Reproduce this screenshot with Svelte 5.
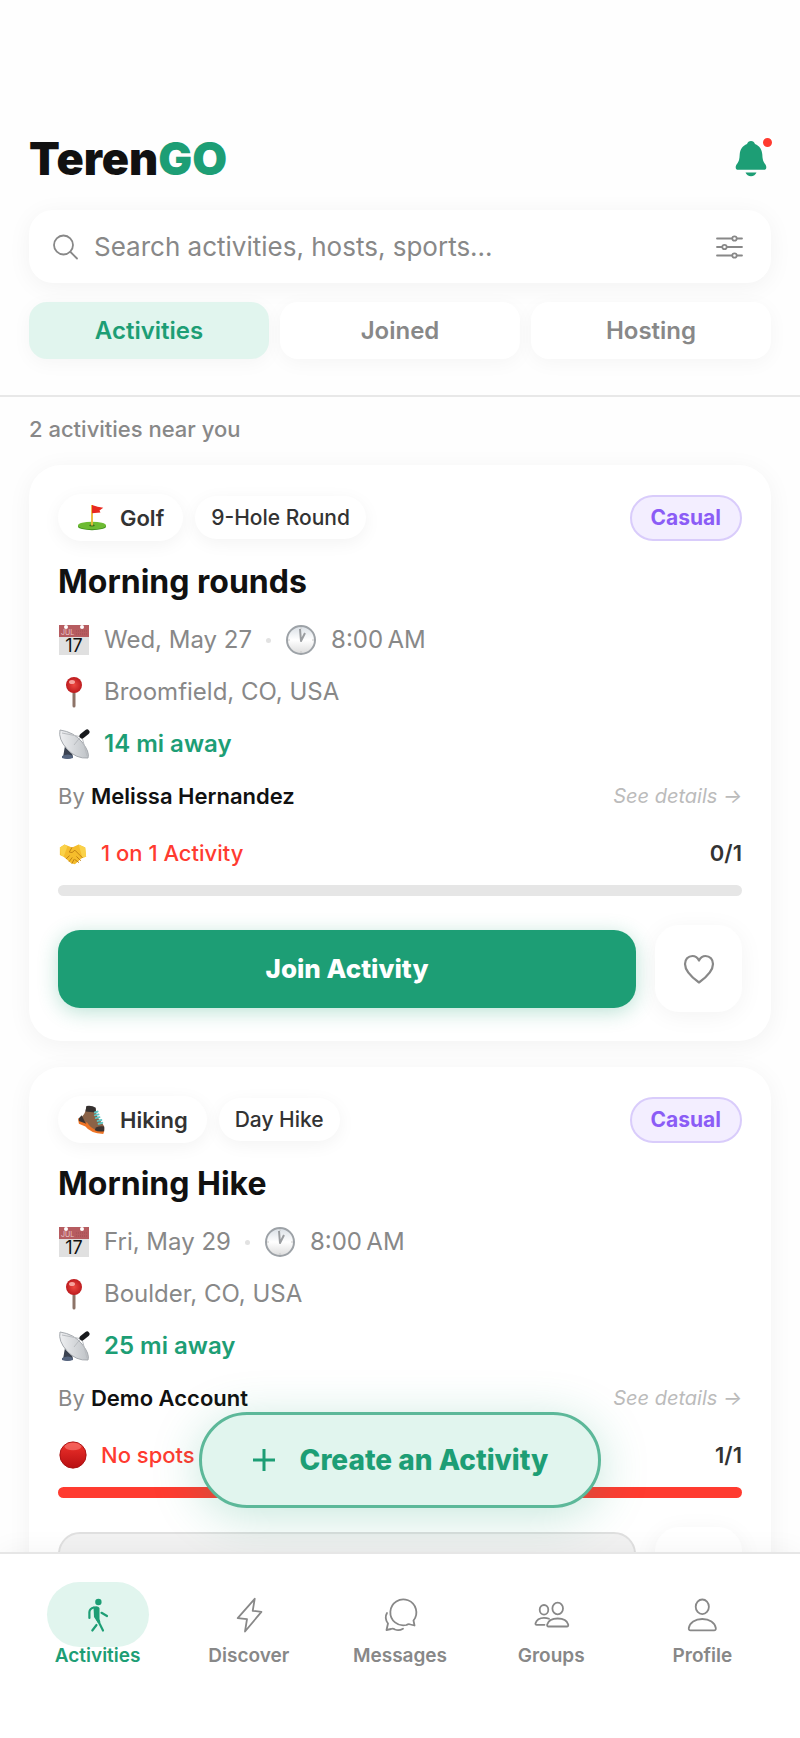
<script>
  let tab = $state('Activities');
  let page = $state('Activities');
  let search = $state('');
  let liked = $state([]);

  const tabs = ['Activities', 'Joined', 'Hosting'];
  const pages = ['Activities', 'Discover', 'Messages', 'Groups', 'Profile'];

  const activities = [
    {
      id: 1,
      sport: 'Golf',
      kind: '9-Hole Round',
      level: 'Casual',
      title: 'Morning rounds',
      date: 'Wed, May 27',
      time: '8:00\u202fAM',
      place: 'Broomfield, CO, USA',
      distance: '14 mi away',
      host: 'Melissa Hernandez',
      note: '1 on 1 Activity',
      joined: 0,
      spots: 1,
    },
    {
      id: 2,
      sport: 'Hiking',
      kind: 'Day Hike',
      level: 'Casual',
      title: 'Morning Hike',
      date: 'Fri, May 29',
      time: '8:00\u202fAM',
      place: 'Boulder, CO, USA',
      distance: '25 mi away',
      host: 'Demo Account',
      note: 'No spots',
      joined: 1,
      spots: 1,
    },
  ];

  function toggleLike(id) {
    liked = liked.includes(id) ? liked.filter((x) => x !== id) : [...liked, id];
  }
</script>

{#snippet emoji(name)}
  <svg class="emoji" viewBox="0 0 32 32" aria-hidden="true">
    {#if name === 'Golf'}
      <ellipse cx="16" cy="25" rx="15" ry="4" fill="#3f8f1d" />
      <ellipse cx="16" cy="24" rx="15" ry="4" fill="#6dbb33" />
      <ellipse cx="16" cy="24" rx="3" ry="1" fill="#3b6b1c" />
      <path d="M16 2v22" stroke="#e9b93a" stroke-width="2" />
      <path d="M16 2l6 2 6 1-4 3 1 2-9 1z" fill="#e8281f" />
    {:else if name === 'Hiking'}
      <path d="M1 14l1 6 7 3q5 7 19 8l1-3-12-4-7-7z" fill="#ee7426" />
      <path d="M10 2l10 2q0 8 5 13 5 5 4 10l-10-1q-5-2-8-7l-9-4q7-4 8-13z" fill="#8a6247" />
      <path d="M10 1q6-1 10 2v5l-11-1z" fill="#35302f" />
      <path d="M2 14l3-3 3 6 2 3-8-3zM20 24q5-2 9-1v5q-6 1-10-1z" fill="#3d3432" />
      <path d="M19 8l3-1M19 11l4-1M20 14l4-1M22 17l4-1M23 20l4-1" stroke="#5fc7c6" stroke-width="2" stroke-linecap="round" />
    {:else if name === 'date'}
      <rect x="1" y="1" width="30" height="30" fill="#e0e0e0" />
      <rect x="1" y="1" width="30" height="12" fill="#b65c60" />
      <path d="M18 7h11M18 10h11" stroke="#a04e52" stroke-dasharray="1 1" />
      <circle cx="8" cy="3" r="2" fill="#fff" />
      <circle cx="24" cy="3" r="2" fill="#fff" />
      <text x="3" y="11" font-size="7" fill="#e9c9ca">JUL</text>
      <text x="16" y="28" font-size="18" text-anchor="middle" fill="#111">17</text>
    {:else if name === 'time'}
      <circle cx="16" cy="16" r="14" fill="url(#clock-face)" stroke="#9da2a7" stroke-width="2" />
      <path d="M16 3v2M16 27v2M3 16h2M27 16h2" stroke="#c8c8c8" />
      <path d="M15 5l1 12 4-8" fill="none" stroke="#9a9da0" stroke-width="2" stroke-linejoin="round" />
    {:else if name === 'place'}
      <path d="M16 16v14" stroke="#8d7468" stroke-width="3" stroke-linecap="round" />
      <circle cx="16" cy="9" r="8" fill="url(#pin-head)" />
      <ellipse cx="14" cy="6" rx="3" ry="2" fill="#f7a29c" />
    {:else if name === 'distance'}
      <path d="M7 18l-2 11q5 3 10 0l-2-9z" fill="#3b4250" />
      <path d="M4 28q6-3 11 0v2q-6 2-11 0z" fill="#56657f" />
      <path d="M2 2q14 2 22 12t6 16Q18 31 9 21T2 2z" fill="url(#dish)" stroke="#a5a9ae" />
      <path d="M16 17L24 7M4 5l20 4M24 9l5 19" stroke="#b9bcc0" fill="none" />
      <path d="M24 8l5-4" stroke="#17191c" stroke-width="5" stroke-linecap="round" />
    {:else if name === '1 on 1 Activity'}
      <path d="M2 10l5-3 8 3 7-3 7 3 1 10-4 1-8 7-4-1-8-7-4-2z" fill="#f5bd2c" />
      <path d="M2 10l5-3 3 2-4 11-3-2zM22 7l7 3 1 10-4 1z" fill="#fad24a" />
      <path d="M15 10l-3 5q3 2 6-2l8 8M9 22l3-3M12 25l3-4M15 27l2-4M18 23l4 3M20 20l4 4" fill="none" stroke="#bd7d12" stroke-linecap="round" />
    {:else}
      <circle cx="16" cy="16" r="14" fill="url(#red-ball)" stroke="#a80f10" />
      <ellipse cx="16" cy="7" rx="9" ry="4" fill="#ff8f88" opacity="0.5" />
    {/if}
  </svg>
{/snippet}

{#snippet navIcon(name)}
  <svg class="nav-icon" viewBox="0 0 40 40" aria-hidden="true">
    {#if name === 'Activities'}
      <g fill="none" stroke="currentColor" stroke-width="2.2" stroke-linecap="round" stroke-linejoin="round">
        <path d="M11.4 23v-6q.3-3.5 4.5-4.5M23.5 17.8l5.5 3.2M18.5 30l-4.2 5.5M19 24l3 5.5 3 6" />
      </g>
      <circle cx="20.4" cy="7" r="3.2" fill="currentColor" />
      <path d="M15.5 11.8q4.5-1.3 6 1.2v11l1 3.5-2.5.5-4-6z" fill="currentColor" />
    {:else}
      <g fill="none" stroke="currentColor" stroke-width="1.8" stroke-linecap="round" stroke-linejoin="round">
        {#if name === 'Discover'}
          <path d="M25.7 3.8l-2 12 8.7 1L16 36.5l2-12.3-9.3-1z" />
        {:else if name === 'Messages'}
          <path d="M34.5 30.5l-1-5a13 13 0 1 0-7 4.5q2-1.5 4-.5z" />
          <path d="M7 18q-3 5 1 10.5L6.5 35l4.5-1q2-.8 4 .5 4 1.5 8-.8" />
        {:else if name === 'Groups'}
          <ellipse cx="13" cy="14.8" rx="4.3" ry="4.8" />
          <ellipse cx="26.7" cy="13.5" rx="5.3" ry="5.8" />
          <path d="M17.5 31.5q-1.7 0-1.3-2c1-3.5 5-6 10.5-6s9.500 2.5 10.5 6q.4 2-1.3 2z" />
          <path d="M13.5 29.8H5.7q-1.5 0-1.2-1.6c1-3.2 4-5.4 8.5-5.4q3 0 5 1" />
        {:else}
          <ellipse cx="20.3" cy="11.8" rx="6.6" ry="7.3" />
          <path d="M8.5 35.3q-2 0-1.7-2.3c1-5.3 6.2-9 13.5-9s12.500 3.7 13.5 9q.3 2.3-1.7 2.3z" />
        {/if}
      </g>
    {/if}
  </svg>
{/snippet}

<div class="app">
  <svg class="defs" aria-hidden="true">
    <linearGradient id="clock-face" x2="0" y2="1">
      <stop offset="0" stop-color="#d9dfe5" />
      <stop offset="0.5" stop-color="#fff" />
      <stop offset="1" stop-color="#dcdcdc" />
    </linearGradient>
    <radialGradient id="pin-head">
      <stop offset="0" stop-color="#ee4840" />
      <stop offset="1" stop-color="#bd1b1e" />
    </radialGradient>
    <linearGradient id="dish">
      <stop offset="0" stop-color="#eeeff1" />
      <stop offset="1" stop-color="#bfc3c7" />
    </linearGradient>
    <linearGradient id="red-ball" x2="0" y2="1">
      <stop offset="0" stop-color="#f0332c" />
      <stop offset="1" stop-color="#b80f12" />
    </linearGradient>
  </svg>

  <header>
    <div class="brand-row">
      <h1>Teren<span>GO</span></h1>
      <button type="button" class="bell" aria-label="Notifications">
        <svg viewBox="0 0 32 36" aria-hidden="true">
          <path d="M16 0c2 0 3.3 1.2 4 3 4.500 1.8 7 5.5 7.3 10.5.2 4.500.7 7 2.7 9.5 1 1.2 1.3 2.2 1.3 3.5 0 1.500-1 2.300-2.300 2.300H3c-1.300 0-2.300-.8-2.300-2.300 0-1.300.3-2.300 1.300-3.500 2-2.500 2.500-5 2.700-9.500C5 8.500 7.500 4.800 12 3c.7-1.800 2-3 4-3zM10.500 31.500h11q-1.500 3.700-5.500 3.700t-5.500-3.700z" fill="currentColor" />
        </svg>
        <span class="badge"></span>
      </button>
    </div>

    <div class="search">
      <svg class="search-icon" viewBox="0 0 28 28" fill="none" stroke="currentColor" stroke-width="1.8" stroke-linecap="round" aria-hidden="true">
        <circle cx="11.5" cy="12" r="9.5" />
        <path d="M18.5 19l6.5 6.5" />
      </svg>
      <input type="text" aria-label="Search" placeholder="Search activities, hosts, sports..." bind:value={search} />
      <button type="button" class="filter" aria-label="Filters">
        <svg viewBox="0 0 28 28" fill="none" stroke="currentColor" stroke-width="1.8" stroke-linecap="round" aria-hidden="true">
          <path d="M2 5.500h15M22 5.500h5M2 14h5M12 14h15M2 22.500h15M22 22.500h5" />
          <circle cx="19.5" cy="5.5" r="2.2" />
          <circle cx="9.5" cy="14" r="2.2" />
          <circle cx="19.5" cy="22.5" r="2.2" />
        </svg>
      </button>
    </div>

    <div class="tabs">
      {#each tabs as name}
        <button type="button" class="tab" class:active={tab === name} onclick={() => tab = name}>{name}</button>
      {/each}
    </div>
  </header>

  <main>
    <div class="feed">
      <p class="count">{activities.length} activities near you</p>

      {#each activities as a (a.id)}
        <article class="card">
          <div class="chips">
            <span class="chip sport">{@render emoji(a.sport)}{a.sport}</span>
            <span class="chip">{a.kind}</span>
            <span class="level">{a.level}</span>
          </div>
          <h2>{a.title}</h2>

          <div class="details">
            <div class="detail">
              {@render emoji('date')}<span>{a.date}</span>
              <i class="dot"></i>
              {@render emoji('time')}<span>{a.time}</span>
            </div>
            <div class="detail">{@render emoji('place')}<span>{a.place}</span></div>
            <div class="detail near">{@render emoji('distance')}<span>{a.distance}</span></div>
          </div>

          <div class="host">
            <span>By <b>{a.host}</b></span>
            <a href="#activity-{a.id}">See details →</a>
          </div>

          <div class="spots">
            <span class="note">{@render emoji(a.note)}{a.note}</span>
            <b>{a.joined}/{a.spots}</b>
          </div>
          <div class="bar">
            <div class="fill" style="width: {(a.joined / a.spots) * 100}%"></div>
          </div>

          <div class="actions">
            {#if a.joined < a.spots}
              <button type="button" class="join">Join Activity</button>
            {:else}
              <button type="button" class="join full" aria-label="Activity full" disabled></button>
            {/if}
            <button
              type="button"
              class="like"
              class:active={liked.includes(a.id)}
              aria-label="Save activity"
              onclick={() => toggleLike(a.id)}
            >
              <svg viewBox="0 0 32 32" fill="none" stroke="currentColor" stroke-width="2.2" stroke-linejoin="round" aria-hidden="true">
                <path d="M16 7.500C14.500 4.500 12 3 9.500 3 5 3 2 6.500 2 11c0 7.500 7 13.500 14 18.500 7-5 14-11 14-18.500 0-4.500-3-8-7.500-8C20 3 17.500 4.500 16 7.500z" />
              </svg>
            </button>
          </div>
        </article>
      {/each}
    </div>

    <div class="fab-row">
      <button type="button" class="fab">
        <svg viewBox="0 0 24 24" stroke="currentColor" stroke-width="3" aria-hidden="true">
          <path d="M12 1v22M1 12h22" />
        </svg>
        Create an Activity
      </button>
    </div>
  </main>

  <nav>
    {#each pages as name}
      <button type="button" class="nav-item" class:active={page === name} onclick={() => page = name}>
        <span class="pill">{@render navIcon(name)}</span>
        {name}
      </button>
    {/each}
  </nav>
</div>

<style>
  :global(body) {
    margin: 0;
    background: #fefefe;
  }

  .app {
    display: flex;
    flex-direction: column;
    height: 100vh;
    font-family: Inter, "Liberation Sans", sans-serif;
    color: #111;
    background: #fefefe;
  }

  .defs {
    position: absolute;
    width: 0;
    height: 0;
  }

  button {
    padding: 0;
    border: none;
    font-family: inherit;
    cursor: pointer;
  }

  h1, h2, p {
    margin: 0;
  }

  svg {
    display: block;
    flex-shrink: 0;
  }

  header {
    padding: 132px 29px 36px;
    border-bottom: 2px solid #e8e8e8;
  }

  .brand-row {
    display: flex;
    align-items: center;
    justify-content: space-between;
    margin-bottom: 24px;
  }

  h1 {
    font-size: 45px;
    line-height: 54px;
    font-weight: 900;
  }

  h1 span {
    color: #1d9e75;
  }

  .bell {
    position: relative;
    padding: 0 4px;
    background: none;
    color: #1d9e75;
  }

  .bell svg {
    width: 32px;
    height: 36px;
  }

  .badge {
    position: absolute;
    top: -6px;
    right: -4px;
    width: 9px;
    height: 9px;
    border: 3px solid #fff;
    border-radius: 50%;
    background: #ff3b30;
  }

  .search {
    display: flex;
    align-items: center;
    gap: 14px;
    height: 73px;
    padding: 0 28px 0 23px;
    margin-bottom: 19px;
    border-radius: 24px;
    background: #fff;
    color: #888;
    box-shadow: 0 4px 24px rgba(0, 0, 0, 0.05);
  }

  .search-icon, .filter svg {
    width: 28px;
    height: 28px;
  }

  .search input {
    flex: 1;
    min-width: 0;
    padding: 0;
    border: none;
    outline: none;
    background: none;
    font-family: inherit;
    font-size: 26px;
    color: #111;
  }

  .search input::placeholder {
    color: #888;
    opacity: 1;
  }

  .filter {
    background: none;
    color: #888;
  }

  .tabs {
    display: grid;
    grid-template-columns: repeat(3, 1fr);
    gap: 11px;
  }

  .tab {
    height: 57px;
    border-radius: 18px;
    background: #fff;
    font-size: 24px;
    font-weight: 600;
    color: #888;
    box-shadow: 0 4px 20px rgba(0, 0, 0, 0.04);
  }

  .tab.active {
    background: #e1f5ee;
    color: #1d9e75;
  }

  main {
    position: relative;
    flex: 1;
    min-height: 0;
  }

  .feed {
    height: 100%;
    box-sizing: border-box;
    padding: 19px 29px 0;
    overflow: hidden;
  }

  .count {
    margin-bottom: 23px;
    font-size: 22px;
    line-height: 26px;
    font-weight: 500;
    color: #888;
  }

  .card {
    padding: 29px;
    margin-bottom: 26px;
    border-radius: 32px;
    background: #fff;
    box-shadow: 0 4px 24px rgba(0, 0, 0, 0.05);
  }

  .chips {
    display: flex;
    align-items: center;
    gap: 12px;
    height: 47px;
  }

  .chip {
    display: flex;
    align-items: center;
    height: 43px;
    padding: 0 16px;
    border-radius: 24px;
    background: #fff;
    font-size: 21px;
    font-weight: 500;
    color: #333;
    box-shadow: 0 4px 18px rgba(0, 0, 0, 0.05);
  }

  .chip.sport {
    gap: 13px;
    height: 47px;
    padding: 0 19px;
    font-size: 22px;
    font-weight: 600;
  }

  .level {
    margin-left: auto;
    padding: 0 19px;
    border: 2px solid #d9ccfb;
    border-radius: 24px;
    background: #f3eeff;
    font-size: 21px;
    line-height: 42px;
    font-weight: 700;
    color: #8b5cf6;
  }

  .emoji {
    width: 32px;
    height: 32px;
  }

  .chip .emoji, .note .emoji {
    width: 30px;
    height: 30px;
  }

  h2 {
    margin: 21px 0 22px;
    font-size: 32px;
    line-height: 40px;
    font-weight: 700;
  }

  .details {
    display: flex;
    flex-direction: column;
    gap: 20px;
  }

  .detail {
    display: flex;
    align-items: center;
    gap: 14px;
    font-size: 24px;
    line-height: 32px;
    color: #888;
  }

  .near {
    font-weight: 600;
    color: #1d9e75;
  }

  .dot {
    width: 5px;
    height: 5px;
    border-radius: 50%;
    background: #e2e2e2;
  }

  .host, .spots {
    display: flex;
    align-items: center;
    justify-content: space-between;
    font-size: 22px;
    line-height: 28px;
  }

  .host {
    margin: 22px 0 28px;
    color: #888;
  }

  .host b {
    font-weight: 600;
    color: #111;
  }

  .host a {
    font-size: 20px;
    font-style: italic;
    color: #bbb;
    text-decoration: none;
  }

  .spots b {
    font-weight: 600;
    color: #333;
  }

  .note {
    display: flex;
    align-items: center;
    gap: 13px;
    font-weight: 500;
    color: #ff3b30;
  }

  .bar {
    height: 11px;
    margin: 17px 0 29px;
    border-radius: 6px;
    background: #e6e6e6;
    overflow: hidden;
  }

  .fill {
    height: 100%;
    background: #ff3b30;
  }

  .actions {
    display: flex;
    align-items: center;
    gap: 19px;
  }

  .join {
    flex: 1;
    height: 78px;
    box-sizing: border-box;
    border-radius: 22px;
    background: #1d9e75;
    font-size: 26px;
    font-weight: 800;
    color: #fff;
    box-shadow: 0 4px 20px rgba(29, 158, 117, 0.3);
  }

  .join.full {
    border: 2px solid #e0e0e0;
    background: #f2f2f2;
    box-shadow: none;
  }

  .like {
    display: flex;
    align-items: center;
    justify-content: center;
    width: 87px;
    height: 87px;
    border-radius: 24px;
    background: #fff;
    color: #888;
    box-shadow: 0 4px 24px rgba(0, 0, 0, 0.05);
  }

  .like.active {
    color: #ff3b30;
  }

  .like svg {
    width: 32px;
    height: 32px;
  }

  .fab-row {
    position: absolute;
    right: 0;
    bottom: 44px;
    left: 0;
    display: flex;
    justify-content: center;
    pointer-events: none;
  }

  .fab {
    display: flex;
    align-items: center;
    gap: 24px;
    height: 96px;
    padding: 0 50px;
    border: 3px solid #5cb899;
    border-radius: 48px;
    background: #e1f5ee;
    font-size: 28px;
    font-weight: 800;
    color: #1d9e75;
    box-shadow: 0 8px 48px rgba(29, 158, 117, 0.25);
    pointer-events: auto;
  }

  .fab svg {
    width: 24px;
    height: 24px;
  }

  nav {
    position: relative;
    display: grid;
    grid-template-columns: repeat(5, 1fr);
    padding: 28px 22px 73px;
    border-top: 2px solid #e6e6e6;
    background: #fff;
    box-shadow: 0 -4px 24px rgba(0, 0, 0, 0.04);
  }

  .nav-item {
    display: flex;
    flex-direction: column;
    align-items: center;
    background: none;
    font-size: 19px;
    line-height: 18px;
    font-weight: 600;
    color: #888;
  }

  .nav-item.active {
    color: #1d9e75;
  }

  .pill {
    display: flex;
    align-items: center;
    justify-content: center;
    width: 102px;
    height: 65px;
    border-radius: 33px;
  }

  .nav-item.active .pill {
    background: #e1f5ee;
  }

  .nav-icon {
    width: 40px;
    height: 40px;
  }
</style>
